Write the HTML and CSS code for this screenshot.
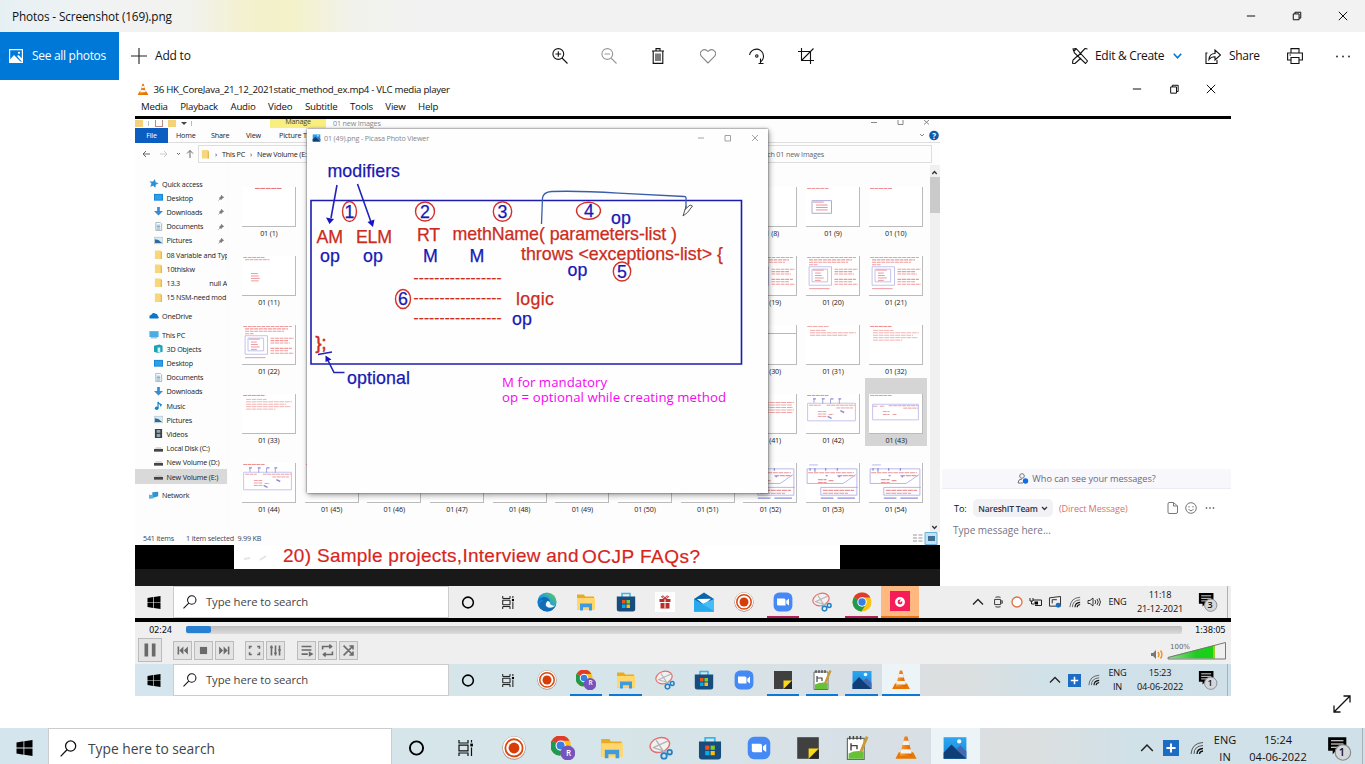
FILE: index.html
```html
<!DOCTYPE html>
<html lang="en">
<head>
<meta charset="utf-8">
<title>Photos - Screenshot (169).png</title>
<link rel="stylesheet" href="styles.css">
</head>
<body>
<svg class="defs" width="0" height="0">
  <defs>
    <linearGradient id="edgeG" x1="0" y1="1" x2="1" y2="0"><stop offset="0" stop-color="#0c59a4"/><stop offset=".5" stop-color="#1b9de2"/><stop offset="1" stop-color="#6bd14a"/></linearGradient>
    <linearGradient id="photoG" x1="0" y1="0" x2="0" y2="1"><stop offset="0" stop-color="#2ea6ee"/><stop offset="1" stop-color="#1787dd"/></linearGradient>
    <linearGradient id="coneG"><stop offset="0" stop-color="#f9a030"/><stop offset="1" stop-color="#dc6000"/></linearGradient>
    <linearGradient id="volG"><stop offset="0" stop-color="#8ce08a"/><stop offset=".6" stop-color="#1ecc20"/><stop offset="1" stop-color="#12d60e"/></linearGradient>
  </defs>
  <symbol id="win" viewBox="0 0 16 16"><path d="M0 2.4 7 1.3V7.6H0zM7.8 1.2 16 0V7.6H7.8zM0 8.4H7v6.3L0 13.6zM7.8 8.4H16V16L7.8 14.8z"/></symbol>
  <symbol id="lens" viewBox="0 0 16 16"><g fill="none" stroke="currentColor" stroke-width="1.2"><circle cx="10" cy="5.7" r="4.8"/><path d="M6.6 9.2.6 15.4"/></g></symbol>
  <symbol id="cortana" viewBox="0 0 16 16"><circle cx="8" cy="8" r="6.6" fill="none" stroke="#000" stroke-width="1.9"/></symbol>
  <symbol id="task" viewBox="0 0 16 16"><path d="M1.500 0v3h9V0M1.500 16v-3h9v3M1.500 5.200h9v5.600h-9zM14 0v2.500M14 7.500V16" fill="none" stroke="#111" stroke-width="1.200"/><rect x="12.800" y="3.600" width="2.600" height="2.800"/></symbol>
  <symbol id="rec" viewBox="0 0 20 20"><circle cx="10" cy="10" r="9.700" fill="#b08a7d"/><circle cx="10" cy="9.700" r="9.200" fill="#fff"/><circle cx="10" cy="9.900" r="7.200" fill="none" stroke="#d8480f" stroke-width="1.500"/><circle cx="10" cy="10" r="4.500" fill="#d83c09"/></symbol>
  <symbol id="chrome" viewBox="0 0 20 20"><circle cx="10" cy="10" r="9.500" fill="#fbc116"/><path d="M10 10 1.800 5.200A9.500 9.500 0 0 1 18.300 5.500H10z" fill="#df3b2f"/><path d="M1.800 5.200A9.500 9.500 0 0 0 9.500 19.500L14 12z" fill="#219a50"/><circle cx="10" cy="10" r="4.700" fill="#fff"/><circle cx="10" cy="10" r="3.700" fill="#3a7de6"/></symbol>
  <symbol id="chromer" viewBox="0 0 20 20"><use href="#chrome" x="-1" y="-1" width="18" height="18"/><circle cx="14" cy="14.200" r="6.200" fill="#7653bd"/></symbol>
  <symbol id="folder" viewBox="0 0 20 20"><path d="M1 2.500h7l1 2h9v13H1z" fill="#e9ab24"/><path d="M1 6h18v11.500H1z" fill="#ffd76d"/><path d="M4 18.500v-7h12v7h-3v-3.200H7v3.200z" fill="#3f9bdd"/></symbol>
  <symbol id="snip" viewBox="0 0 20 20"><ellipse cx="9" cy="7.500" rx="8.300" ry="6" transform="rotate(-18 9 7.500)" fill="#f1f1f1" stroke="#e36f6f" stroke-width="1.200"/><path d="M3 9.500 14 13M6 3.500l7 11M16 4 4 9.500" stroke="#b5b5b5" stroke-width="1.200"/><g fill="none" stroke="#2380c5" stroke-width="1.500"><circle cx="12.500" cy="16.600" r="2.300"/><circle cx="17.200" cy="13.500" r="1.900"/></g></symbol>
  <symbol id="store" viewBox="0 0 20 20"><path d="M6 5V1.500h8V5" fill="none" stroke="#35b9ec" stroke-width="1.500"/><path d="M.8 4.500h18.400V17q0 2.500-2.500 2.500H3.300Q.8 19.500.8 17z" fill="#174c7f"/><path d="M6 8h3.500v3.500H6z" fill="#f1511b"/><path d="M10.500 8H14v3.500h-3.500z" fill="#80cc28"/><path d="M6 12.500h3.500V16H6z" fill="#00adef"/><path d="M10.500 12.500H14V16h-3.500z" fill="#fbbc09"/></symbol>
  <symbol id="zoomus" viewBox="0 0 20 20"><rect x=".6" y=".6" width="18.800" height="18.800" rx="5.500" fill="#4489f5"/><path d="M4 6.500h7q1.500 0 1.500 1.500v5.500h-7Q4 13.500 4 12zM13.300 8.700 16 6.600v6.800l-2.700-2z" fill="#fff"/></symbol>
  <symbol id="note" viewBox="0 0 20 20"><path d="M1 1h18v18H1z" fill="#404040"/><path d="M10.500 10.500H19L10.500 19z" fill="#fcd912"/><path d="M19 11v8h-8z" fill="#252525"/></symbol>
  <symbol id="npp" viewBox="0 0 20 20"><path d="M2 2h14v17.500H2z" fill="#fff" stroke="#677167"/><path d="M3 14.500q6-3 12.500-1.500v6H3z" fill="#66c136"/><path d="M4 0v3M7 0v3M10 0v3M13 0v3M5 6v6M5 8h5v3" stroke="#444" stroke-width="1.200" fill="none"/><path d="m18.500.5-5.500 13" stroke="#c99a38" stroke-width="2.300"/></symbol>
  <symbol id="photo" viewBox="0 0 20 20"><path d="M.5 1h19v18H.5z" fill="url(#photoG)"/><path d="m.5 14 6.500-7 12.500 12H.5z" fill="#103f77"/><path d="m11 11 3.500-3 5 5v6z" fill="#4468b1"/><circle cx="13.500" cy="4.500" r="1.800" fill="#e9fbff"/></symbol>
  <symbol id="cone" viewBox="0 0 20 20"><path d="M4 13.500h12l2.800 5.500H1.200z" fill="#ea7600"/><path d="M8.800.5h2.400L15.200 16.500H4.800z" fill="url(#coneG)"/><path d="M7.900 4h4.200l.9 3.600H7zM6.200 11h7.600l.9 3.500H5.300z" fill="#f2f2f2"/></symbol>
  <symbol id="edge" viewBox="0 0 20 20"><circle cx="10" cy="10" r="9.600" fill="url(#edgeG)"/><path d="M1 11C2 4 11 3 13 9q.5 2.500-2 3 3 3 8 .6-2 6.500-9 7-6-1-7-6 0-4 3.500-5Q3 7 1 11z" fill="#126bb8"/><path d="M10.500 9q-3 3-1 5.500 4 3 9-1-4.500.3-5.500-2 .5-2-2.500-2.500z" fill="#eef7f5"/></symbol>
  <symbol id="gift" viewBox="0 0 20 20"><path d="M0 0h20v20H0z" fill="#fff"/><path d="M4.500 7H15.500v3H4.500zM5.500 11h9v5.500h-9z" fill="#ba2e29"/><path d="M10 7v9.500" stroke="#fff"/><path d="M10 7Q5 5 7 4t3 3q1-4 3-3t-3 3" fill="none" stroke="#ba2e29"/></symbol>
  <symbol id="mail" viewBox="0 0 20 20"><path d="m0 7 10-6.500L20 7v12.500H0z" fill="#0a64ad"/><path d="m3 7 14-.2-7 6z" fill="#fff"/><path d="M0 7v12.500h20L10 13z" fill="#28a9ed"/><path d="M20 7v12.500L8 12z" fill="#45bdf7"/></symbol>
  <symbol id="pinkapp" viewBox="0 0 20 20"><path d="M0 0h20v20H0z" fill="#f51c58"/><circle cx="10" cy="11" r="3.700" fill="none" stroke="#fff" stroke-width="2.500"/><path d="m10 11 3-3.500" stroke="#fff" stroke-width="1.500"/></symbol>
  <symbol id="up" viewBox="0 0 12 12"><path d="m1 8.500 5-5 5 5" fill="none" stroke="#222" stroke-width="1.300"/></symbol>
  <symbol id="plus" viewBox="0 0 14 14"><path d="M0 0h14v14H0z" fill="#1c6cc4"/><path d="M7 3v8M3 7h8" stroke="#fff" stroke-width="1.700"/></symbol>
  <symbol id="wifi" viewBox="0 0 14 14"><g fill="none" stroke="#555"><path d="M1 13Q2 2 13 1.500M4 13Q4 5 13 4.500"/><path d="M7 13q0-5 6-5.500M9.500 13q0-2.500 3.500-3" stroke="#111" stroke-width="1.300"/></g></symbol>
  <symbol id="notif" viewBox="0 0 22 22"><path d="M1 1h16v12H8l-3 3v-3H1z"/><path d="M3.500 4.200h11M3.500 7h11M3.500 9.800h7" stroke="#fff" stroke-width=".9"/><circle cx="14" cy="14.500" r="6.800" fill="#d4d7d9" stroke="#86898b"/></symbol>
  <symbol id="dl" viewBox="0 0 10 10"><path d="M3.500 0h3v4.500H10l-5 5-5-5h3.500z" fill="#3b8bd0"/></symbol>
  <symbol id="star" viewBox="0 0 10 10"><path d="m6 0 .8 3.500L10 4.800 7 6.300l-.5 3.500L4 7.500.8 8.500 2.200 5 0 2.700l4 .2z" fill="#2d8fd6"/></symbol>
  <symbol id="desk" viewBox="0 0 10 10"><path d="M0 1h10v7.500H0z" fill="#1783d4"/><path d="M1 2h8v5.500H1z" fill="#2c9eea"/></symbol>
  <symbol id="doc" viewBox="0 0 10 10"><path d="M2 .5h5L8.500 2v7.500H2z" fill="#fff" stroke="#8fa0ab" stroke-width=".8"/><path d="M3 3.500h4M3 5h4M3 6.500h4M3 8h4" stroke="#3e86b5" stroke-width=".7"/></symbol>
  <symbol id="pic" viewBox="0 0 10 10"><path d="M0 1.500h10v7H0z" fill="#dce9f1" stroke="#8aa" stroke-width=".5"/><path d="M1 7.700V3.500l4 1L9 7.700z" fill="#2c6c9d"/></symbol>
  <symbol id="fold" viewBox="0 0 10 10"><path d="M1 .5h6.500l1 1V10H1z" fill="#f8d67c"/><path d="M7.500 2h1.200v8H7.500z" fill="#dfb24c"/></symbol>
  <symbol id="cloud" viewBox="0 0 12 10"><path d="M1 8.500Q-.8 5 2.500 4.500 4.500.5 8 3q2.500 0 2.500 2.500 2.500 2 .2 3z" fill="#0f75c9"/></symbol>
  <symbol id="pc" viewBox="0 0 12 10"><path d="M.5 1h11v7H.5z" fill="#49aee2"/><path d="M2 9h8" stroke="#6a99ad"/></symbol>
  <symbol id="cube" viewBox="0 0 10 10"><path d="m0 2 6-1.500L9.500 2v6.500L4 10 0 8.500z" fill="#1aa2b5"/><path d="M4 4h3v5l-3 .8z" fill="#d3f3f6"/></symbol>
  <symbol id="music" viewBox="0 0 10 10"><path d="M4.500 8V.8q0 2 3.500 3.200l-1 2" fill="none" stroke="#1680c6" stroke-width="1.300"/><circle cx="3" cy="8" r="2" fill="#1680c6"/></symbol>
  <symbol id="film" viewBox="0 0 10 10"><path d="M1 0h8v10H1z" fill="#3b4248"/><path d="M3 1h4v3.300H3zM3 5.500h4V9H3z" fill="#92a6ae"/></symbol>
  <symbol id="disk" viewBox="0 0 10 10"><path d="M0 5.500h10v3H0z" fill="#454545"/><path d="m1 5 1-1h6l1 1z" fill="#bbb"/></symbol>
  <symbol id="net" viewBox="0 0 12 10"><path d="m4 1 7-.5V6L4 8z" fill="#3291d0"/><path d="m0 4 5 .5v4L0 9z" fill="#5cb1df"/></symbol>
  <symbol id="pin" viewBox="0 0 8 8"><path d="M4 1.500 6.500 4 5 4.500 3.500 6.500 1.500 4.500l2-1.500zM2.500 5.500.5 7.500" fill="#777" stroke="#777" stroke-width=".7"/></symbol>
  <!-- slide miniatures -->
  <symbol id="s0" viewBox="0 0 54 40"><path d="M13 1.500h28" stroke="#e76a70" stroke-dasharray="5 .6"/></symbol>
  <symbol id="s1" viewBox="0 0 54 40"><path d="M1 1.500h22M3 3.800h25" stroke="#ee9797" stroke-dasharray="4 .6"/><path d="M9 18h7M9 20.500h8M9 23h9M9 25.500h8" stroke="#ee9797"/></symbol>
  <symbol id="s2" viewBox="0 0 54 40"><path d="M1 1.500h50M3 4h44M3 6.500h40M3 9h9M29 13.500h24M29 16h18M29 18.500h20M29 24h22M29 26.500h18M29 29h24" stroke="#ef9a9a" stroke-width="1.100" stroke-dasharray="4 .7"/><path d="M3 11h23v19H3zM6 13.500h16v13H6z" fill="none" stroke="#aaa6e0" stroke-width=".7"/><path d="M7 14.500h11M9 17.500h6M9 20h7M9 22.500h9M9 25h6M3 33.500h21" stroke="#e98b94" stroke-width=".9"/></symbol>
  <symbol id="s3" viewBox="0 0 54 40"><path d="M1 1.500h22" stroke="#e88" stroke-dasharray="4 .5"/><path d="M4 5.500h21M4 8h47M4 10.500h41M4 13h46M4 15.500h30" stroke="#f2b0b0" stroke-dasharray="5 .7"/></symbol>
  <symbol id="s4" viewBox="0 0 54 40"><path d="M1 1.500h22" stroke="#e88" stroke-dasharray="4 .5"/><path d="M1.500 9.500h49v18h-49z" fill="none" stroke="#c3c3ee"/><path d="M3 11.500h12M21 11.500h29M31 14.300h17M12 18h9M12 20.500h9M12 23h9M23 21h5" stroke="#e99ca0" stroke-dasharray="4 .6"/><path d="M8 9V5m9 5V5m8 5V5m9 5V5" stroke="#8c8cd6" stroke-width=".8"/><path d="M7 5h3m6 0h3m6 0h3m5 0h3M35 17l4 2M22 23l4 2" stroke="#8c8cd6" stroke-width="1.500"/></symbol>
  <symbol id="s5" viewBox="0 0 54 40"><path d="M1 1.500h22" stroke="#ec8e93" stroke-dasharray="4 .5"/><path d="M3.500 10.500h47v16h-47z" fill="none" stroke="#c3c3ee"/><path d="M4 12.500h5M11 12.500h5M20 12h30M35 14.500h15M14 18h7M14 21h7M24 21h4" stroke="#e99ca0" stroke-dasharray="4 .6"/></symbol>
  <symbol id="s6" viewBox="0 0 54 40"><path d="M3 2h9M1 6h51v27H15V25H53M1 6v15h37l13-9" fill="none" stroke="#a3a3e2" stroke-width=".8"/><path d="M2 10h47M32 13h18M12 17h9M12 20h9M23 18h5M17 28h32M17 31h26" stroke="#ea949b" stroke-width="1.200" stroke-dasharray="5 .7"/><path d="M4 8v-3m5 4V5m11 3V5m12 3V5M20 13h2m11 1h2M15 36h13m4 0h18" stroke="#9090da" stroke-width="1.300"/></symbol>
  <symbol id="s9" viewBox="0 0 54 40"><path d="M1 1.500h22" stroke="#ec8e93" stroke-dasharray="4 .5"/><path d="M6 14h20v13H6z" fill="none" stroke="#aaa8da"/><path d="M7 15.500h11M10 18.500h12M10 21h12M10 23.500h12" stroke="#dc7580" stroke-width=".8"/></symbol>
</svg>

<header class="titlebar"><span class="t-title">Photos - Screenshot (169).png</span>
  <div class="winbtns">
    <svg viewBox="0 0 12 12"><path d="M1 6h10"/></svg>
    <svg viewBox="0 0 12 12"><path d="M1.500 3.500h7v7h-7zM3.500 3.500v-2h7v7h-2"/></svg>
    <svg viewBox="0 0 12 12"><path d="m1 1 10 10M11 1 1 11"/></svg>
  </div>
</header>

<nav class="toolbar">
  <div class="seeall"><svg width="14" height="14" viewBox="0 0 14 14"><path d="M.6.600h12.800v12.800H.6z" fill="none" stroke="#fff" stroke-width="1.200"/><path d="M1 10.500 5 6l7 7H1zM8 7l1.500-1 4 4v3.500z" fill="#fff"/><circle cx="10" cy="3.800" r="1.100" fill="#fff"/></svg><span class="t-see">See all photos</span></div>
  <div class="addto"><svg width="16" height="16" viewBox="0 0 16 16"><path d="M8 0v16M0 8h16" stroke="#222" stroke-width="1.100"/></svg><span class="t-add">Add to</span></div>
  <div class="tools">
    <svg viewBox="0 0 16 16"><circle cx="6.300" cy="6" r="5.400"/><path d="m10 10 5.500 5.500M6.300 3.200v5.600M3.500 6h5.600"/></svg>
    <svg class="dim" viewBox="0 0 16 16"><circle cx="6.300" cy="6" r="5.400"/><path d="m10 10 5.500 5.500M3.500 6h5.600"/></svg>
    <svg viewBox="0 0 16 16"><path d="M2 3h12M3.200 3v12.400h9.600V3M6 3V.6h4V3M6 5.500v7.500M8 5.500v7.500M10 5.500v7.500"/></svg>
    <svg class="dim2" viewBox="0 0 16 16"><path d="M8 15 1.300 8.200C-1.800 4 4-1 8 3.500c4-4.500 9.800.5 6.700 4.700z"/></svg>
    <svg viewBox="0 0 16 16"><path d="M.6 7A7 7 0 1 1 11 14.200M9.500 15.500h5M11.500 15.500v-5"/><circle cx="7.800" cy="8" r="1.200"/></svg>
    <svg viewBox="0 0 16 16"><path d="M3.500 0v12.500H16M0 3.500h12.500V16M3.500 12.500 15.500.5"/></svg>
  </div>
  <div class="actions">
    <svg width="16" height="16" viewBox="0 0 16 16"><path d="m1 1 3-.5L15.500 13l-2 2.500L2.500 5zM15.500 1 13 .5 6 8M9 10l-6 5.500-2.500-.3L1 12l5-4.500M4 1 2 3"/></svg><span class="t-edit">Edit &amp; Create</span><svg class="chev" width="9" height="6" viewBox="0 0 9 6"><path d="m.8.8 3.700 4 3.700-4"/></svg>
    <svg class="share" width="16" height="15" viewBox="0 0 16 15"><path d="M2.500 4H1v10.500h11V11M4 10.500q.5-6 6-6V1l5.500 5-5.500 5V7.800q-4 0-6 2.700z"/></svg><span class="t-share">Share</span>
    <svg class="print" width="16" height="16" viewBox="0 0 16 16"><path d="M4 5V.6h8V5M4 12H.6V5h14.800v7H12M4 9.500h8v6H4zM2.500 7h1.500"/></svg>
    <svg class="dots" width="16" height="4" viewBox="0 0 16 4"><circle cx="2" cy="2.500" r=".9"/><circle cx="8" cy="2.500" r=".9"/><circle cx="14" cy="2.500" r=".9"/></svg>
  </div>
</nav>

<main class="stage">
<section class="shot">
  <div class="vtitle"><svg width="12" height="13"><use href="#cone"/></svg><span class="t-vlc">36 HK_CoreJava_21_12_2021static_method_ex.mp4 - VLC media player</span>
    <div class="winbtns small">
      <svg viewBox="0 0 12 12"><path d="M1 6h10"/></svg>
      <svg viewBox="0 0 12 12"><path d="M2 3.500h7v7.500H2zM4 3.500v-2h7V9H9"/></svg>
      <svg viewBox="0 0 12 12"><path d="m1 1 10 10M11 1 1 11"/></svg>
    </div>
  </div>
  <div class="vmenu"><span>Media</span><span>Playback</span><span>Audio</span><span>Video</span><span>Subtitle</span><span>Tools</span><span>View</span><span>Help</span></div>

  <div class="video">
    <div class="left">
      <div class="explorer">
        <div class="ql"><i class="fi"></i><i class="bar"></i><i class="ck"></i><i class="fi"></i><i class="dn"></i><i class="bar"></i><b>Manage</b><span>01 new Images</span>
          <svg width="64" height="7" viewBox="0 0 64 7"><path d="M1 2.500h6M28 0v4.500h5V0M54 0l5 4.500M59 0l-5 4.500" fill="none" stroke="#888"/></svg></div>
        <div class="tabs"><b>File</b><span>Home</span><span>Share</span><span>View</span><span class="pt">Picture Tools</span><svg width="20" height="11" viewBox="0 0 20 11"><path d="m1 4 2 2 2-2" fill="none" stroke="#888"/><circle cx="15" cy="5.500" r="4.800" fill="#0b5cad"/><text x="15" y="8.500" font-size="8" font-weight="bold" text-anchor="middle" fill="#fff" font-family="Open Sans">?</text></svg></div>
        <div class="addr">
          <svg width="58" height="10" viewBox="0 0 58 10" fill="none" stroke="#666"><path d="M11 5H4m3-3L4 5l3 3M51 9V1.500m-3 3 3-3 3 3"/><path d="M21 5h7m-3-3 3 3-3 3" stroke="#ccc"/><path d="m38 4 1.500 1.500L41 4"/></svg>
          <div class="path"><svg width="9" height="10"><use href="#fold"/></svg><i>›</i><span>This PC</span><i>›</i><span>New Volume (E:)</span></div>
          <div class="srch">Search 01 new Images</div>
        </div>
        <div class="ebody">
          <div class="side">
            <div class="r top"><svg><use href="#star"/></svg>Quick access</div>
            <div class="r"><svg><use href="#desk"/></svg>Desktop<svg class="pin"><use href="#pin"/></svg></div>
            <div class="r"><svg><use href="#dl"/></svg>Downloads<svg class="pin"><use href="#pin"/></svg></div>
            <div class="r"><svg><use href="#doc"/></svg>Documents<svg class="pin"><use href="#pin"/></svg></div>
            <div class="r"><svg><use href="#pic"/></svg>Pictures<svg class="pin"><use href="#pin"/></svg></div>
            <div class="r"><svg><use href="#fold"/></svg>08 Variable and Type</div>
            <div class="r"><svg><use href="#fold"/></svg>10thiskw</div>
            <div class="r"><svg><use href="#fold"/></svg>13.3<em>null A</em></div>
            <div class="r"><svg><use href="#fold"/></svg>15 NSM-need mod</div>
            <div class="r top gap"><svg><use href="#cloud"/></svg>OneDrive</div>
            <div class="r top gap"><svg><use href="#pc"/></svg>This PC</div>
            <div class="r"><svg><use href="#cube"/></svg>3D Objects</div>
            <div class="r"><svg><use href="#desk"/></svg>Desktop</div>
            <div class="r"><svg><use href="#doc"/></svg>Documents</div>
            <div class="r"><svg><use href="#dl"/></svg>Downloads</div>
            <div class="r"><svg><use href="#music"/></svg>Music</div>
            <div class="r"><svg><use href="#pic"/></svg>Pictures</div>
            <div class="r"><svg><use href="#film"/></svg>Videos</div>
            <div class="r"><svg><use href="#disk"/></svg>Local Disk (C:)</div>
            <div class="r"><svg><use href="#disk"/></svg>New Volume (D:)</div>
            <div class="r sel"><svg><use href="#disk"/></svg>New Volume (E:)</div>
            <div class="r top gap"><svg><use href="#net"/></svg>Network</div>
          </div>
          <div class="grid">
            <div class="c c1"><svg><use href="#s0"/></svg>01 (1)</div><div class="c c9"><svg></svg>01 (8)</div><div class="c"><svg><use href="#s9"/></svg>01 (9)</div><div class="c"><svg><path d="M1 1.500h22" stroke="#ec8e93" stroke-dasharray="4 .5"/></svg>01 (10)</div>
            <div class="c c1"><svg><use href="#s1"/></svg>01 (11)</div><div class="c c9"><svg><use href="#s2"/></svg>01 (19)</div><div class="c"><svg><use href="#s2"/></svg>01 (20)</div><div class="c"><svg><use href="#s2"/></svg>01 (21)</div>
            <div class="c c1"><svg><use href="#s2"/></svg>01 (22)</div><div class="c c9"><svg><path d="M1 8.500h52" stroke="#eea0a0"/></svg>01 (30)</div><div class="c"><svg viewBox="0 0 54 40"><path d="M1 1.500h22M4 5.500h16M4 8h47M4 10.500h38" stroke="#f0a6a6" stroke-dasharray="5 .7"/></svg>01 (31)</div><div class="c"><svg><use href="#s3"/></svg>01 (32)</div>
            <div class="c c1"><svg><use href="#s3"/></svg>01 (33)</div><div class="c c9"><svg><path d="M4 8.500h47M4 11h45M4 13.500h46M4 16h47M4 18.500h46" stroke="#f0a6a6" stroke-dasharray="5 .7"/></svg>01 (41)</div><div class="c"><svg><use href="#s4"/></svg>01 (42)</div><div class="c on"><svg><use href="#s5"/></svg>01 (43)</div>
            <div class="c c1"><svg><use href="#s4"/></svg>01 (44)</div><div class="c"><svg><use href="#s5"/></svg>01 (45)</div><div class="c"><svg></svg>01 (46)</div><div class="c"><svg></svg>01 (47)</div><div class="c"><svg></svg>01 (48)</div><div class="c"><svg></svg>01 (49)</div><div class="c"><svg></svg>01 (50)</div><div class="c"><svg></svg>01 (51)</div><div class="c"><svg><use href="#s6"/></svg>01 (52)</div><div class="c"><svg><use href="#s6"/></svg>01 (53)</div><div class="c"><svg><use href="#s6"/></svg>01 (54)</div>
          </div>
          <div class="scroll"><svg width="9" height="9" viewBox="0 0 9 9"><path d="m2.300 6 2.200-2.500L6.700 6"/></svg><i></i><svg width="9" height="9" viewBox="0 0 9 9"><path d="m2.300 3 2.200 2.500L6.700 3"/></svg></div>
        </div>
        <div class="status"><span>541 items</span><span>1 item selected&nbsp; 9.99 KB</span>
          <svg width="26" height="13" viewBox="0 0 26 13"><path d="M1 3h4M1 6h4M1 9h4M6.500 3h4M6.500 6h4M6.500 9h4" stroke="#999"/><path d="M13 .5h12v12H13z" fill="#bfe3f5" stroke="#6ab2d8"/><path d="M16 4h7v5h-7z" fill="#3f6f92"/></svg></div>
      </div>
      <div class="slide"><div class="slidein">
        <svg width="605" height="24" viewBox="235 545 605 24" fill="#d8251c" stroke="#d8251c" stroke-width=".2" font-size="19" font-family="Liberation Sans"><path d="m245 559 6-1m10 2 6-4" stroke="#e5e5e5" stroke-width="2"/><text x="284" y="561.500" textLength="28">20)</text><text x="318" y="562" textLength="145">Sample projects,</text><text x="463.500" y="562" textLength="116">Interview and</text><text x="583" y="562.500" textLength="118">OCJP FAQs?</text></svg>
      </div></div>
      <div class="strip"></div>

      <div class="popup">
        <div class="ptitle"><svg width="9" height="8"><use href="#photo"/></svg><span>01 (49).png - Picasa Photo Viewer</span>
          <svg width="62" height="8" viewBox="0 0 62 8"><path d="M1 4h6M28 1.500h5.500v5.500H28zM55 1l6 6M61 1l-6 6" fill="none" stroke="#999" stroke-width=".9"/></svg></div>
        <svg class="board" width="461" height="346" viewBox="307 147 461 346">
          <g fill="none" stroke="#1c1caf" stroke-width="1.600">
            <path d="M311 200.500H741.500V364H311z"/><path d="M337 185l-6 33M357.500 184l13.500 38M318 354.500l14-2.500M344.500 372.500H334l-6-12" stroke="#2323b8"/>
            <path d="m541.500 224 1-26q1-6 9-6.500 26-1 67 1.700l66 3.300q2 0 1.500 3V209" stroke="#3a5fa8" stroke-width="1.300"/>
          </g>
          <path d="m329.500 224-3.500-6.500 8 1.500zM373 227l-5.500-5 7-2.500zM325.500 355.500l6 4-6 2.500z" fill="#1515c5"/>
          <path d="m683 216 2-6.500 5-4.500 2.500 1-5 6.500zM685 210l1-4" fill="#fff" stroke="#555"/>
          <g fill="none" stroke="#d3312b" stroke-width="1.400"><ellipse cx="349.500" cy="211.500" rx="7" ry="10"/><ellipse cx="425" cy="211.500" rx="9.500" ry="9.500"/><ellipse cx="502.500" cy="211.500" rx="9.200" ry="9.800"/><ellipse cx="588.500" cy="210.800" rx="12" ry="8.500"/><ellipse cx="622" cy="271.500" rx="8.700" ry="9.500"/><ellipse cx="403" cy="299" rx="7.500" ry="9.500"/></g>
          <g fill="#1818b4" stroke="#1818b4" stroke-width=".25" font-size="17.800" font-family="Liberation Sans">
            <text x="327.500" y="176.500" textLength="72.500">modifiers</text>
            <g text-anchor="middle"><text x="349.500" y="217.500">1</text><text x="425" y="217.500">2</text><text x="502.500" y="217.500">3</text><text x="589" y="217">4</text><text x="622" y="277.500">5</text><text x="403" y="305">6</text></g>
            <text x="320" y="261.500">op</text><text x="363" y="261.500">op</text><text x="423" y="261.500">M</text><text x="469.500" y="261.500">M</text><text x="611" y="224">op</text><text x="567.500" y="276">op</text><text x="512" y="325">op</text><text x="347" y="383.500" textLength="63">optional</text>
          </g>
          <g fill="#cc2b20" stroke="#cc2b20" stroke-width=".25" font-size="17.800" font-family="Liberation Sans">
            <text x="316.500" y="242.500">AM</text><text x="356" y="242.500" textLength="36">ELM</text><text x="417" y="241" textLength="23">RT</text><text x="452.500" y="239.500" textLength="224.500">methName( parameters-list )</text><text x="521" y="259.500" textLength="202">throws &lt;exceptions-list&gt; {</text><text x="516" y="305" textLength="38">logic</text><text x="315.500" y="349" stroke-width=".6">};</text>
            <g font-size="15"><text x="413.500" y="283" textLength="88">-----------------</text><text x="413.500" y="303" textLength="88">-----------------</text><text x="413.500" y="323" textLength="88">-----------------</text></g>
          </g>
          <g fill="#f606f0" font-size="13.200" font-family="Open Sans"><text x="502" y="387" textLength="105">M for mandatory</text><text x="502" y="402" textLength="224">op = optional while creating method</text></g>
        </svg>
      </div>
    </div>
    <div class="chat">
      <div class="who"><svg width="12" height="11" viewBox="0 0 12 11"><circle cx="5" cy="3" r="2.300" fill="none" stroke="#777"/><path d="M1 10q0-4 4-4M1 10h5" fill="none" stroke="#777"/><circle cx="8.500" cy="8" r="2.700" fill="#0d6fe8"/></svg><span>Who can see your messages?</span></div>
      <div class="to"><span class="tol">To:</span><b>NareshIT Team<svg width="7" height="5" viewBox="0 0 7 5"><path d="m1 1 2.500 2.500L6 1"/></svg></b><em>(Direct Message)</em>
        <svg class="cic" width="50" height="12" viewBox="0 0 50 12"><g fill="none" stroke="#777"><path d="M2 .5h4.500L10.500 4v6q0 1.500-1.500 1.500H2Q1 11.500 1 10V2Q1 .5 2 .5zM6.500 1v3h4"/><circle cx="24" cy="6" r="5.300"/><path d="M21.500 7q2.500 3.500 5 0"/></g><path d="M22 4v1.500M26 4v1.500" stroke="#777"/><g fill="#777"><circle cx="39.500" cy="6" r=".9"/><circle cx="43" cy="6" r=".9"/><circle cx="46.500" cy="6" r=".9"/></g></svg></div>
      <div class="type">Type message here...</div>
    </div>
  </div>

  <div class="bar tb inner grey">
    <div class="start"><svg><use href="#win"/></svg></div>
    <div class="search"><svg><use href="#lens"/></svg><span>Type here to search</span></div>
    <div class="apps">
      <i><svg class="sm"><use href="#cortana"/></svg></i><i><svg class="sm"><use href="#task"/></svg></i><i><svg><use href="#edge"/></svg></i><i><svg><use href="#folder"/></svg></i><i><svg><use href="#store"/></svg></i><i><svg><use href="#gift"/></svg></i><i><svg><use href="#mail"/></svg></i><i><svg><use href="#rec"/></svg></i><i class="run"><svg><use href="#zoomus"/></svg></i><i><svg><use href="#snip"/></svg></i><i class="run"><svg><use href="#chrome"/></svg></i><i class="hot"><svg><use href="#pinkapp"/></svg></i>
    </div>
    <div class="tray">
      <i class="w20"><svg class="ti"><use href="#up"/></svg></i>
      <i class="w19"><svg class="ti" viewBox="0 0 12 14"><path d="M2 4h7v6H2zM9 6l2-.5v3L9 8M3 1.500q3-1 6 0M3 12.500q3 1 6 0" fill="none" stroke="#222"/></svg></i>
      <i class="w19"><svg class="ti" viewBox="0 0 12 12"><circle cx="6" cy="6" r="5" fill="#fff" stroke="#dd7042" stroke-width="1.300"/></svg></i>
      <i class="w19"><svg class="tw" viewBox="0 0 14 10"><path d="M4 3h8.500v5.500H6M1 1v3h3V1M2.500 4v3H5" fill="none" stroke="#222"/><path d="M5.500 4.500H9v3H5.500z"/></svg></i>
      <i class="w20"><svg class="tw" viewBox="0 0 14 13"><path d="M1 2l12-1.500V11H1zM4 8V4h5" fill="none" stroke="#222"/><circle cx="10.500" cy="10" r="2.700" fill="#1770c8"/></svg></i>
      <i class="w20"><svg class="ti"><use href="#wifi"/></svg></i>
      <i class="w18"><svg class="tw" viewBox="0 0 14 12"><path d="M1 4.500h2L6 2v8L3 7.500H1zM8 4q1.500 2 0 4M10 3q2.500 3 0 6M12 2q3 4 0 8" fill="none" stroke="#222" stroke-width=".9"/></svg></i>
      <span class="lang">ENG</span><span class="clock">11:18<br>21-12-2021</span><i class="nt"><svg><use href="#notif"/></svg><b>3</b></i>
    </div>
  </div>
  <div class="ctl">
    <div class="seek"><span class="c1t">02:24</span><div class="track"><i></i></div><span>1:38:05</span></div>
    <div class="btns">
      <i class="big"><svg viewBox="0 0 24 24"><path d="M6 5h4v14H6zM14 5h4v14h-4z"/></svg></i>
      <i class="g1"><svg viewBox="0 0 19 19"><path d="M4 5h1.800v9H4zM10.500 5v9L6 9.500zM15.500 5v9L11 9.500z"/></svg></i><i><svg viewBox="0 0 19 19"><path d="M5.500 5.500h8v8h-8z"/></svg></i><i><svg viewBox="0 0 19 19"><path d="M15 5h-1.800v9H15zM8.500 5v9L13 9.500zM3.500 5v9L8 9.500z"/></svg></i>
      <i class="g2"><svg class="ln" viewBox="0 0 19 19"><path d="M4 7.500V5h2.500M12.500 5H15v2.500M15 11.500V14h-2.500M6.500 14H4v-2.500"/></svg></i><i><svg class="ln" viewBox="0 0 19 19"><path d="M5 4v11M9.500 4v11M14 4v11M3.500 6h3M8 12.500h3M12.500 9h3"/></svg></i>
      <i class="g2"><svg class="ln" viewBox="0 0 19 19"><path d="M4 5h11M4 9h11M4 13.500h7"/><path d="m13 12 2.500 1.500L13 15z"/></svg></i><i><svg class="ln" viewBox="0 0 19 19"><path d="M4 8.500V5h9.500m-2-2 2.500 2-2.500 2M15 10.500V14H5.500m2-2L5 14l2.500 2"/></svg></i><i><svg class="ln" viewBox="0 0 19 19"><path d="m4 4 10.500 10.500M10.500 14.500h4v-4M4 15 14.500 4.500M10.500 4.500h4v4"/></svg></i>
      <svg class="vol" width="80" height="20" viewBox="1148 642 80 20"><path d="M1151 655h2l3-3v9l-3-3h-2z" fill="#777"/><path d="M1158 654q2 3 0 5M1160.500 652.500q3 4 0 8" fill="none" stroke="#f0942f" stroke-width="1.500"/><path d="M1168 660.500v-1.500l47-12v13.500z" fill="url(#volG)"/><path d="M1213 647h2v13.500h-2z" fill="#a4c829"/><path d="M1168 659.500 1225.500 644.500V661H1168z" fill="none" stroke="#777"/><text x="1170" y="651" font-size="7" fill="#666" font-family="DejaVu Sans" textLength="20" lengthAdjust="spacingAndGlyphs">100%</text></svg>
    </div>
  </div>
  <div class="bar tb inner blue">
    <div class="start"><svg><use href="#win"/></svg></div>
    <div class="search"><svg><use href="#lens"/></svg><span>Type here to search</span></div>
    <div class="apps">
      <i><svg class="sm"><use href="#cortana"/></svg></i><i><svg class="sm"><use href="#task"/></svg></i><i><svg><use href="#rec"/></svg></i><i class="run"><svg><use href="#chromer"/></svg><b>R</b></i><i class="run"><svg><use href="#folder"/></svg></i><i><svg><use href="#snip"/></svg></i><i><svg><use href="#store"/></svg></i><i><svg><use href="#zoomus"/></svg></i><i class="run"><svg><use href="#note"/></svg></i><i class="run"><svg><use href="#npp"/></svg></i><i class="run"><svg><use href="#photo"/></svg></i><i class="run act"><svg><use href="#cone"/></svg></i>
    </div>
    <div class="tray">
      <i class="w20"><svg class="ti"><use href="#up"/></svg></i><i class="w19"><svg class="tp"><use href="#plus"/></svg></i><i class="w19"><svg class="ti"><use href="#wifi"/></svg></i>
      <span class="lang">ENG<br>IN</span><span class="clock">15:23<br>04-06-2022</span><i class="nt"><svg><use href="#notif"/></svg><b>1</b></i>
    </div>
  </div>
</section>
<svg class="expand" width="18" height="18" viewBox="0 0 18 18"><path d="M1 17 17 1M10.500 1H17v6.500M1 10.500V17h6.500" fill="none" stroke="#111" stroke-width="1.300"/></svg>
</main>

<footer class="tb outer blue">
  <div class="start"><svg><use href="#win"/></svg></div>
  <div class="search"><svg><use href="#lens"/></svg><span>Type here to search</span></div>
  <div class="apps">
    <i><svg class="sm"><use href="#cortana"/></svg></i><i><svg class="sm"><use href="#task"/></svg></i><i><svg><use href="#rec"/></svg></i><i><svg><use href="#chromer"/></svg><b>R</b></i><i><svg><use href="#folder"/></svg></i><i><svg><use href="#snip"/></svg></i><i><svg><use href="#store"/></svg></i><i><svg><use href="#zoomus"/></svg></i><i><svg><use href="#note"/></svg></i><i><svg><use href="#npp"/></svg></i><i><svg><use href="#cone"/></svg></i><i class="act"><svg><use href="#photo"/></svg></i>
  </div>
  <div class="tray">
    <i class="w20"><svg class="ti"><use href="#up"/></svg></i><i class="w19"><svg class="tp"><use href="#plus"/></svg></i><i class="w27"><svg class="ti"><use href="#wifi"/></svg></i>
    <span class="lang">ENG<br>IN</span><span class="clock">15:24<br>04-06-2022</span><i class="nt"><svg><use href="#notif"/></svg><b>1</b></i>
  </div>
</footer>
</body>
</html>
```
FILE: styles.css
```css
* { box-sizing: border-box; }
body { margin: 0; width: 1365px; height: 764px; overflow: hidden; display: flex; flex-direction: column; background: #fff; color: #111; font-family: "Open Sans", "Noto Sans", sans-serif; font-size: 12px; white-space: nowrap; }
svg { flex: none; display: block; }
i, em { font-style: normal; }
.defs { position: absolute; }

.titlebar { height: 32px; flex: none; display: flex; align-items: center; justify-content: space-between; padding-left: 12px; background: linear-gradient(90deg, #e6f0f3 0, #f1f3f3 100px, #f2f2ee 190px, #f3f1cf 245px, #f4f2c8 290px, #f2f2ec 350px, #f2f2f2 420px); }
.t-title { font-size: 11.8px; letter-spacing: -.15px; }
.winbtns { display: flex; gap: 36px; padding-right: 17px; }
.winbtns svg { width: 10px; height: 10px; fill: none; stroke: #111; stroke-width: 1.2; }
.winbtns.small { gap: 27px; margin-left: auto; padding-right: 15px; }

.toolbar { height: 48px; flex: none; display: flex; align-items: center; }
.t-see, .t-add, .t-edit, .t-share { position: relative; top: -.5px; }
.seeall { width: 119px; height: 48px; background: #0078d7; color: #fff; display: flex; align-items: center; gap: 9px; padding-left: 9px; letter-spacing: -.3px; }
.addto { display: flex; align-items: center; gap: 8px; padding-left: 12px; width: 433px; letter-spacing: -.2px; }
.tools { display: flex; gap: 33.2px; }
.tools svg { width: 16px; height: 16px; fill: none; stroke: #111; stroke-width: 1.1; }
.tools .dim { stroke: #999; }
.tools .dim2 { stroke: #888; }
.actions { margin-left: auto; display: flex; align-items: center; padding-right: 14px; letter-spacing: -.3px; }
.actions svg { fill: none; stroke: #111; stroke-width: 1.1; }
.t-edit { width: 72px; margin-left: 7px; }
.actions .chev { stroke: #0078d7; stroke-width: 1.6; margin-left: 6px; }
.actions .share { margin-left: 23px; }
.t-share { width: 31px; margin-left: 8px; }
.actions .print { margin-left: 27px; }
.actions .dots { margin-left: 32px; fill: #222; stroke: none; }

.stage { height: 648px; flex: none; position: relative; padding-left: 135px; }
.expand { position: absolute; right: 14px; bottom: 15px; }
.shot { width: 1096px; height: 616px; display: flex; flex-direction: column; }
.vtitle { height: 18px; display: flex; align-items: center; padding-left: 2px; }
.t-vlc { margin-left: 4.500px; font-size: 9.700px; letter-spacing: -.3px; }
.vmenu { height: 18px; display: flex; gap: 12.500px; padding: 1px 0 0 6px; font-size: 9.700px; line-height: 16px; letter-spacing: -.23px; }
.video { height: 470px; flex: none; display: flex; border-top: 3px solid #000; }
.left { width: 805px; position: relative; display: flex; flex-direction: column; }
.explorer { height: 426px; display: flex; flex-direction: column; font-size: 7.200px; background: #fdfdfd; color: #222; letter-spacing: -.18px; }

.ql { height: 9px; flex: none; display: flex; align-items: center; overflow: hidden; color: #888; }
.ql .fi { width: 8px; height: 7px; background: #f5d277; margin-right: 5px; }
.ql .bar { width: 1px; height: 5px; background: #bbb; margin-right: 6px; }
.ql .ck { width: 8px; height: 7px; border: 1px solid #b88; margin-right: 5px; border-top: 0; }
.ql .dn { border: 3px solid transparent; border-top-color: #444; border-bottom: 0; margin-right: 4px; }
.ql b { font-weight: normal; width: 56px; height: 9px; margin-left: 72px; background: #f9ee80; color: #444; text-align: center; line-height: 5px; }
.ql span { margin-left: 7px; line-height: 7px; width: 60px; }
.ql svg { margin-left: auto; margin-right: 6px; }
.tabs { height: 15px; flex: none; display: flex; align-items: center; border-bottom: 1px solid #ddd; }
.tabs b { width: 33px; height: 15px; line-height: 14px; text-align: center; background: #0b5dc2; color: #fff; font-weight: normal; }
.tabs span { margin-left: 8px; width: 27px; }
.tabs .pt { width: 60px; margin-left: 5px; }
.tabs span + span { margin-left: 8px; }
.tabs span.pt { margin-left: 6px; }
.tabs svg { margin-left: auto; margin-right: 1px; }
.addr { height: 22px; flex: none; display: flex; align-items: center; padding-left: 4px; }
.path { flex: 1; height: 18px; margin-left: 1px; border: 1px solid #ddd; display: flex; align-items: center; gap: 5px; padding-left: 2px; }
.srch { width: 195px; height: 18px; line-height: 16px; border: 1px solid #ddd; margin: 0 8px 0 6px; padding-left: 15px; color: #666; }
.ebody { flex: 1; display: flex; min-height: 0; }
.side { width: 93px; padding-top: 11.500px; overflow: hidden; flex: none; border-right: 1px solid #fafafa; }
.r { height: 14.2px; display: flex; align-items: center; padding-left: 19px; }
.r svg { width: 9px; height: 9px; margin-right: 3.5px; }
.r.top { padding-left: 14px; }
.r.top svg { width: 10px; margin-right: 3px; }
.r.gap { margin-top: 4.6px; }
.r.sel { background: #d9d9d9; }
.r .pin { width: 7px; height: 7px; margin-left: auto; margin-right: 2px; }
.r em { margin-left: auto; }
.grid { width: 702px; flex: none; display: grid; grid-template-columns: repeat(11, 62.7px); grid-auto-rows: 69.1px; padding: 6px 0 0 9.500px; }
.c { text-align: center; line-height: 10px; padding-top: 15.500px; font-size: 7.2px; }
.c svg { width: 54px; height: 40px; margin: 0 auto 1.300px; background: #fff; border-right: 1px solid #bbb; border-bottom: 1.500px solid #bbb; }
.c1 { grid-column: 1; }
.c9 { grid-column: 9; }
.on { background: #d5d5d5; height: 68px; margin: 0 0 0 1px; padding-top: 15.500px; }
.scroll { width: 10px; background: #f0f0f0; display: flex; flex-direction: column; margin-bottom: -1px; padding-top: 3px; }
.scroll svg { fill: none; stroke: #333; stroke-width: 1.300; }
.scroll i { height: 36px; background: #cacaca; margin-bottom: auto; }
.status { height: 14px; flex: none; display: flex; align-items: center; padding-left: 8px; gap: 12px; color: #445; }
.status svg { margin-left: auto; margin-right: 2px; }

.slide { height: 24px; background: #000; padding-left: 99px; flex: none; }
.slidein { width: 606px; height: 24px; background: #fff; }
.strip { height: 17px; background: #191919; flex: none; }

.popup { position: absolute; left: 172px; top: 10px; width: 461px; height: 364px; background: #fefefe; box-shadow: 0 0 2px #555, 1px 2px 6px rgba(0,0,0,.4); }
.ptitle { height: 18px; display: flex; align-items: center; padding: 0 9px 0 5px; font-size: 7.200px; letter-spacing: -.17px; color: #888; }
.ptitle span { margin: 0 auto 0 3px; }

.chat { flex: 1; padding-left: 2px; padding-top: 350px; }
.who { height: 20px; background: #f7f7fc; border-bottom: 1px solid #ececf2; display: flex; align-items: center; justify-content: center; gap: 3px; color: #6b6b78; font-size: 9.200px; letter-spacing: -.05px; }
.to { margin-top: 10px; height: 18px; display: flex; align-items: center; padding-left: 12px; font-size: 9.100px; letter-spacing: -.1px; }
.tol { width: 19px; }
.to b { width: 80px; height: 18px; border-radius: 5px; background: #f1f1f6; display: flex; align-items: center; justify-content: center; gap: 3px; font-weight: 600; font-size: 8.500px; letter-spacing: -.2px; color: #334; }
.to b svg { fill: none; stroke: #334; stroke-width: 1.300; }
.to em { margin-left: 6px; color: #d8716d; }
.cic { margin-left: auto; margin-right: 14px; }
.type { margin-top: 5px; padding-left: 11px; line-height: 16px; font-size: 10px; color: #747487; }

.tb { display: flex; align-items: stretch; flex: none; }
.tb .start { width: 38px; display: flex; align-items: center; justify-content: center; }
.tb .start svg { width: 14px; height: 13px; }
.tb .search { width: 276px; background: #fff; border: 1px solid #ccc; display: flex; align-items: center; padding-left: 9px; color: #444; }
.tb .search svg { width: 14px; height: 14px; color: #111; }
.tb .search span { margin-left: 9px; }
.apps { display: flex; margin-left: -.5px; }
.apps i { width: 39.350px; display: flex; align-items: center; justify-content: center; position: relative; }
.apps i b { position: absolute; left: 50%; top: 50%; margin: -1px 0 0 .8px; width: 7px; font: 600 6.500px/10px "Open Sans", sans-serif; letter-spacing: 0; text-align: center; color: #fff; }
.apps svg { width: 20px; height: 20px; }
.apps .sm { width: 14px; height: 13px; }
.apps .act { background: #edf4f7; }
.apps .hot { background: #ffb980; border-bottom: 2px solid #e57814; width: 38px; }
.inner .run { border-bottom: 2px solid #0a79d7; margin: 0 3.500px; width: 32.350px; padding-top: 1px; }
.inner .run.act { margin: 0 .5px; width: 38.350px; }
.grey .run { border-bottom-color: #b3205a; }
.tray { margin-left: auto; display: flex; align-items: center; border-right: 1px solid #aab2b6; }
.tray i { display: flex; justify-content: center; align-items: center; }
.w20 { width: 20px; } .w19 { width: 19px; } .w18 { width: 18px; } .w27 { width: 27px; }
.ti { width: 12px; height: 12px; }
.tw { width: 14px; height: 12px; }
.tp { width: 13px; height: 13px; }
.lang { width: 29px; text-align: center; }
.clock { width: 56px; text-align: center; }
.nt { width: 39px; position: relative; }
.nt svg { width: 20px; height: 20px; }
.nt b { position: absolute; left: 18px; top: 5px; width: 8px; font-size: 9px; line-height: 16px; text-align: center; font-weight: 600; }
.inner { height: 32px; font-size: 9.200px; line-height: 14px; letter-spacing: -.18px; }
.inner .tray { margin-right: 3px; }
.inner .search span { font-size: 11.300px; letter-spacing: -.1px; }
.grey { background: #eeeeee; }
.blue { background: linear-gradient(90deg, #d5e5ee 0, #d6e5e9 45%, #d8dfe5 67%, #dddfdf 75%, #d0e1e8 83%, #d0e0e8 100%); }

.ctl { height: 46px; flex: none; background: #efefef; border-top: 4px solid #000; }
.seek { display: flex; align-items: center; height: 16px; padding-left: 14px; font-family: "DejaVu Sans", sans-serif; font-size: 8.500px; letter-spacing: -.35px; }
.c1t { width: 37px; }
.track { width: 996px; height: 8px; margin-right: 13px; background: linear-gradient(#bbb, #dcdcdc); border-radius: 2px; margin-top: -1px; }
.track i { display: block; width: 25px; height: 7px; border-radius: 2px; background: #2a80d0; }
.btns { display: flex; align-items: center; padding-left: 3px; height: 24px; gap: 2px; }
.btns i { width: 19px; height: 19px; border: 1px solid #bbb; background: #e4e4e4; display: flex; }
.btns i svg { width: 17px; height: 17px; fill: #6a6a6a; }
.btns i .ln { fill: none; stroke: #6a6a6a; stroke-width: 1.800; }
.btns .big { width: 24px; height: 24px; }
.btns .big svg { width: 22px; height: 22px; }
.btns .g1 { margin-left: 8.500px; }
.btns .g2 { margin-left: 9.500px; }
.btns .vol { margin-left: auto; margin-right: 3px; }

.outer { height: 36px; line-height: 17px; font-size: 11px; }
.outer .start { width: 48px; padding-top: 4px; }
.outer .start svg { width: 17px; height: 16px; }
.outer .search { width: 344px; padding-left: 11px; padding-top: 4px; border-bottom: 0; }
.outer .search svg { width: 17px; height: 17px; }
.outer .search span { font-size: 13.800px; margin-left: 11px; }
.outer .apps i { width: 49px; padding-top: 4px; }
.outer .apps i b { margin: 2px 0 0 1px; width: 9px; font-size: 8px; }
.outer .apps svg { width: 24px; height: 24px; }
.outer .apps .sm { width: 17px; height: 16px; }
.outer .tray { margin-right: 2px; padding-top: 4px; }
.outer .w20, .outer .w19 { width: 24px; }
.outer .ti { width: 14px; height: 14px; }
.outer .tp { width: 16px; height: 16px; }
.outer .lang { width: 30px; }
.outer .clock { width: 76px; }
.outer .nt { width: 46px; }
.outer .nt svg { width: 25px; height: 25px; }
.outer .nt b { left: 22px; top: 8px; font-size: 11px; }
```
